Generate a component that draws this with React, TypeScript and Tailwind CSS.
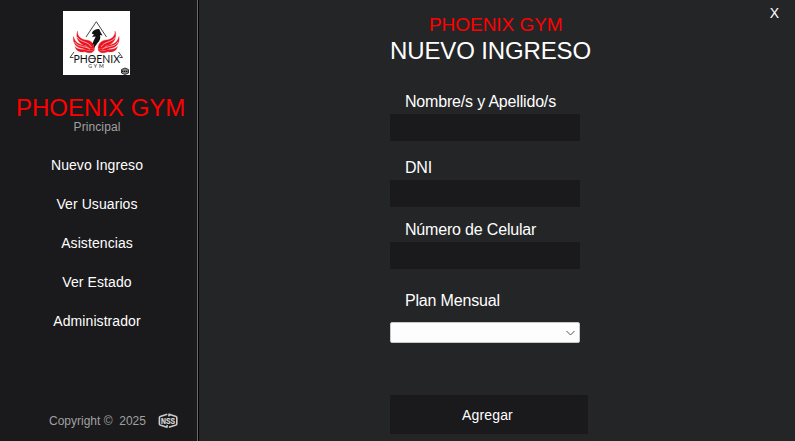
import React from "react";

const NAV = ["Nuevo Ingreso", "Ver Usuarios", "Asistencias", "Ver Estado", "Administrador"];

function PhoenixLogo() {
  return (
    <svg width="67" height="64" viewBox="0 0 67 64" className="block bg-white">
      <path d="M23 26 L33.300 10.700 L43.500 26 M11 41 L7 46.500 H10.500 M55.500 41 L59.500 46.500 H56.500" fill="none" stroke="#333" strokeWidth="0.9" />
      <g fill="#ea1420" stroke="#ea1420" strokeWidth="0.3">
        <path d="M14.500 20 C14 26 19 28.500 23 29 C28 29.500 31 32 31.500 37.500 C28 38.500 25 36.500 23 34.500 C16 33.500 12 27 14.500 20Z" />
        <path d="M10.500 25.500 C12 31.500 16 33.500 22 34.500 C25 37 28 38.500 31.500 38 C28 40.500 23 39.500 20 37.500 C13 37 9.500 32 10.500 25.500Z" />
        <path d="M12 35.500 C15 39.500 20 37.500 24 39.500 C27 40.500 29 39.500 31.500 38.500 C30 43 25 42 22 40.800 C17 41.500 13 40 12 35.500Z" />
        <path d="M52 20 C52.500 26 47.500 28.500 43.500 29 C38.500 29.500 35.500 32 35 37.500 C38.500 38.500 41.500 36.500 43.500 34.500 C50.500 33.500 54.500 27 52 20Z" />
        <path d="M56 25.500 C54.500 31.500 50.500 33.500 44.500 34.500 C41.500 37 38.500 38.500 35 38 C38.500 40.500 43.500 39.500 46.500 37.500 C53.500 37 57 32 56 25.500Z" />
        <path d="M54.500 35.500 C51.500 39.500 46.500 37.500 42.500 39.500 C39.500 40.500 37.500 39.500 35 38.500 C36.500 43 41.500 42 44.500 40.800 C49.500 41.500 53.500 40 54.500 35.500Z" />
      </g>
      <path d="M14 26 C17 31.500 25 30 28.500 36 M11.500 31 C15 36.500 22 34.500 27 38.200 M52.500 26 C49.500 31.500 41.500 30 38 36 M55 31 C51.500 36.500 44.500 34.500 39.500 38.200" stroke="#fff" strokeWidth="0.6" fill="none" />
      <path d="M28.800 22.500 C30 19 33 18 36 18 C37 19 37.200 20.500 37.500 21 L39.500 24.500 L37 24 C38 27.500 36.500 30 34.500 32 L31 37 L31 33 L29.500 34.500 C29.500 30 32.500 27.500 32.500 25.500 L29 26 L31 23.500Z" fill="#111" />
      <text x="10.500" y="51.500" textLength="46.500" lengthAdjust="spacingAndGlyphs" fontSize="11" fill="#111" className="font-['Lato','Liberation_Sans',sans-serif]">PHOENIX</text>
      <path d="M26.500 47.500 H33" stroke="#222" strokeWidth="0.8" />
      <text x="25.300" y="57" textLength="15.500" fontSize="5.200" fill="#222" className="font-['Lato','Liberation_Sans',sans-serif]">GYM</text>
      <path d="M58.500 58.500 L62 57 L65.500 58.500 V62 L62 63.500 L58.500 62Z" fill="#888" stroke="#222" strokeWidth="0.9" />
      <path d="M59 60.400 H65" stroke="#111" strokeWidth="1.300" strokeDasharray="1.300 0.700" />
    </svg>
  );
}

function NssLogo() {
  return (
    <svg width="20" height="16" viewBox="0 0 20 16" className="block">
      <path d="M9.300 1.200 L2.200 3.400 Q1.400 3.700 1.400 4.400 V11 Q1.400 11.700 2.200 12 L8.800 14.300 L9.300 12 M10.700 3.400 L11.200 1.200 L18 3.400 Q18.800 3.700 18.800 4.400 V11 Q18.800 11.700 18 12 L10.900 14.300" fill="none" stroke="#cacaca" strokeWidth="1.600" />
      <text x="3.100" y="10.900" textLength="14" lengthAdjust="spacingAndGlyphs" fontSize="9" fontWeight="700" fill="#dadada" stroke="#dadada" strokeWidth="0.2" className="font-['Liberation_Sans',sans-serif]">NSS</text>
    </svg>
  );
}

function Label({ children }: { children: React.ReactNode }) {
  return <label className="block pl-[15px] text-base leading-5 tracking-[-0.18px] whitespace-nowrap">{children}</label>;
}

function TextField() {
  return <input className="block h-[27px] w-[190px] bg-[#1a1a1c] px-2 text-sm outline-none" />;
}

export default function App() {
  return (
    <div className="flex h-[441px] w-[795px] overflow-hidden bg-[#242527] font-['Liberation_Sans',Arial,sans-serif] text-white">
      <aside className="flex w-[199px] shrink-0 flex-col border-r border-black bg-[#1a1a1c]">
        <div className="flex grow flex-col border-r border-[#6b6b6b]">
          <div className="pt-[11px] pl-[63px]">
            <PhoenixLogo />
          </div>
          <div className="mt-5 pl-4 text-2xl leading-[26px] whitespace-nowrap text-[#ff0000]">PHOENIX GYM</div>
          <div className="-mt-px pr-[3px] text-center text-xs leading-[14px] tracking-[0.1px] text-[#a0a0a0]">Principal</div>
          <nav className="mt-[11px] flex flex-col pr-[3px]">
            {NAV.map((label) => (
              <button key={label} className="h-[39px] text-sm tracking-[0.08px]">
                {label}
              </button>
            ))}
          </nav>
          <footer className="mt-auto mb-3 flex h-4 items-center pl-[49px] text-xs text-[#a0a0a0]">
            <span className="w-[109px] whitespace-pre">Copyright ©  2025</span>
            <NssLogo />
          </footer>
        </div>
      </aside>
      <main className="flex grow justify-between pl-[191px]">
        <div className="w-[202px]">
          <div className="mt-[14px] pl-[39px] text-[19px] leading-[22px] tracking-[-0.05px] whitespace-nowrap text-[#ff0000]">PHOENIX GYM</div>
          <h1 className="mt-px text-2xl leading-7 tracking-[-0.13px] whitespace-nowrap">NUEVO INGRESO</h1>
          <form className="flex flex-col">
            <div className="mt-[27px] flex flex-col gap-[2px]">
              <Label>Nombre/s y Apellido/s</Label>
              <TextField />
            </div>
            <div className="mt-[17px] flex flex-col gap-[2px]">
              <Label>DNI</Label>
              <TextField />
            </div>
            <div className="mt-[13px] flex flex-col gap-[2px]">
              <Label>Número de Celular</Label>
              <TextField />
            </div>
            <div className="mt-[22px] flex flex-col gap-[11px]">
              <Label>Plan Mensual</Label>
              <button type="button" className="flex h-[21px] w-[190px] items-center justify-end rounded-[2px] border border-[#c8c8c8] bg-[#fdfdfd] pr-1">
                <svg width="9" height="6" viewBox="0 0 9 6" fill="none" stroke="#555" strokeWidth="1">
                  <path d="M0.500 1 L4.500 5 L8.500 1" />
                </svg>
              </button>
            </div>
            <button type="button" className="mt-[52px] h-[39px] w-[198px] bg-[#1a1a1c] pt-[1px] pr-[3px] text-sm tracking-[0.14px]">
              Agregar
            </button>
          </form>
        </div>
        <button className="mt-[5px] mr-4 h-4 text-sm leading-4">X</button>
      </main>
    </div>
  );
}
